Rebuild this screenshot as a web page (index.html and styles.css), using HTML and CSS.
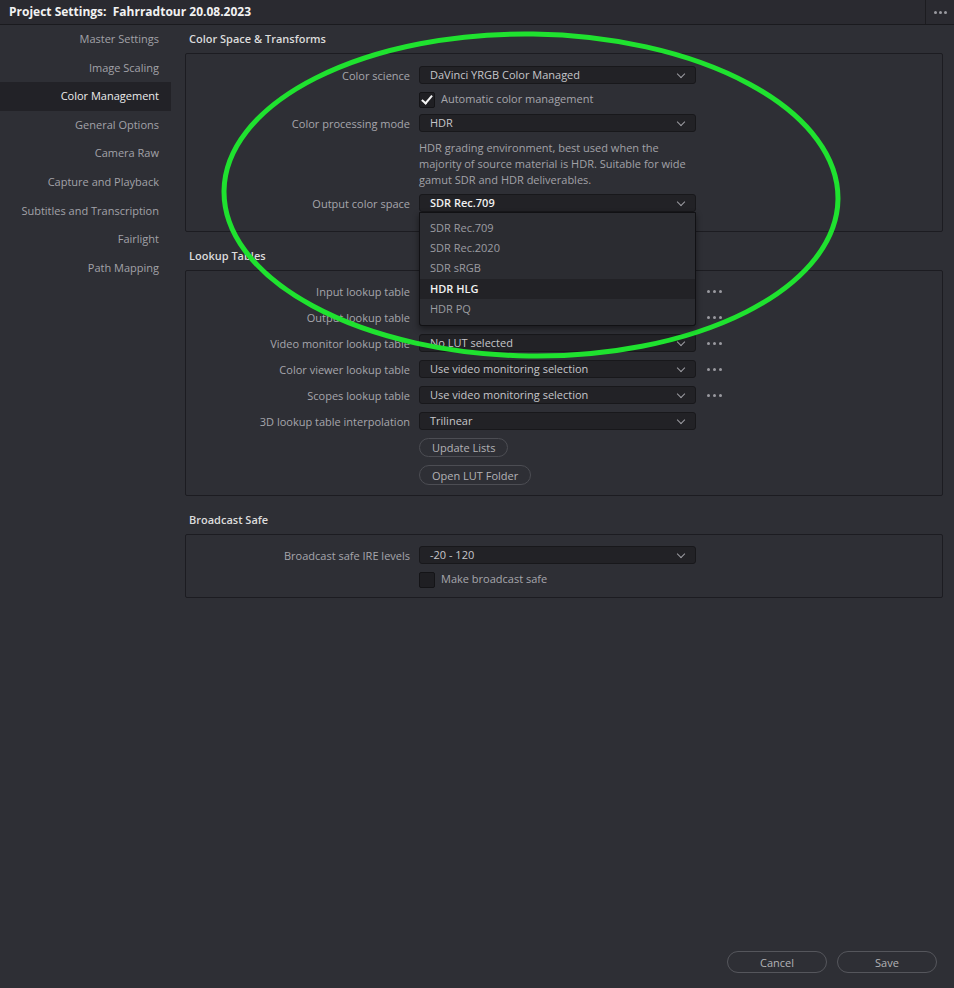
FILE: index.html
```html
<!DOCTYPE html>
<html lang="en">

<head>
    <meta charset="UTF-8">
    <title>Project Settings</title>
    <link rel="stylesheet" href="styles.css">
</head>

<body>

    <div class="window">
        <div class="title_bar">
            <div class="title">Project Settings:&nbsp; Fahrradtour 20.08.2023</div>
            <div class="title_more"><i></i><i></i><i></i></div>
        </div>

        <div class="main">
            <ul class="sidebar">
                <li>Master Settings</li>
                <li>Image Scaling</li>
                <li class="active">Color Management</li>
                <li>General Options</li>
                <li>Camera Raw</li>
                <li>Capture and Playback</li>
                <li>Subtitles and Transcription</li>
                <li>Fairlight</li>
                <li>Path Mapping</li>
            </ul>

            <div class="content">
                <div class="section_title first">Color Space &amp; Transforms</div>
                <div class="panel panel_color">
                    <div class="row">
                        <label>Color science</label>
                        <div class="select">DaVinci YRGB Color Managed</div>
                    </div>
                    <div class="row">
                        <span></span>
                        <div class="check checked">Automatic color management</div>
                    </div>
                    <div class="row">
                        <label>Color processing mode</label>
                        <div class="select">HDR</div>
                    </div>
                    <div class="row desc_row">
                        <span></span>
                        <p class="desc">HDR grading environment, best used when the majority of source material is HDR. Suitable for wide gamut SDR and HDR deliverables.</p>
                    </div>
                    <div class="row">
                        <label>Output color space</label>
                        <div class="select open">
                            SDR Rec.709
                            <ul class="select_menu">
                                <li>SDR Rec.709</li>
                                <li>SDR Rec.2020</li>
                                <li>SDR sRGB</li>
                                <li class="hover">HDR HLG</li>
                                <li>HDR PQ</li>
                            </ul>
                        </div>
                    </div>
                </div>

                <div class="section_title">Lookup Tables</div>
                <div class="panel panel_lut">
                    <!-- 前两个下拉框被弹出菜单挡住 -->
                    <div class="row">
                        <label>Input lookup table</label>
                        <div class="select"></div>
                        <div class="more"><i></i><i></i><i></i></div>
                    </div>
                    <div class="row">
                        <label>Output lookup table</label>
                        <div class="select"></div>
                        <div class="more"><i></i><i></i><i></i></div>
                    </div>
                    <div class="row">
                        <label>Video monitor lookup table</label>
                        <div class="select">No LUT selected</div>
                        <div class="more"><i></i><i></i><i></i></div>
                    </div>
                    <div class="row">
                        <label>Color viewer lookup table</label>
                        <div class="select">Use video monitoring selection</div>
                        <div class="more"><i></i><i></i><i></i></div>
                    </div>
                    <div class="row">
                        <label>Scopes lookup table</label>
                        <div class="select">Use video monitoring selection</div>
                        <div class="more"><i></i><i></i><i></i></div>
                    </div>
                    <div class="row">
                        <label>3D lookup table interpolation</label>
                        <div class="select">Trilinear</div>
                    </div>
                    <div class="row btn_row">
                        <span></span>
                        <div><button class="pill">Update Lists</button></div>
                    </div>
                    <div class="row btn_row">
                        <span></span>
                        <div><button class="pill">Open LUT Folder</button></div>
                    </div>
                </div>

                <div class="section_title">Broadcast Safe</div>
                <div class="panel panel_safe">
                    <div class="row">
                        <label>Broadcast safe IRE levels</label>
                        <div class="select">-20 - 120</div>
                    </div>
                    <div class="row">
                        <span></span>
                        <div class="check">Make broadcast safe</div>
                    </div>
                </div>
            </div>
        </div>

        <div class="footer">
            <button class="pill footer_btn">Cancel</button>
            <button class="pill footer_btn">Save</button>
        </div>
    </div>

    <!-- 标注圈 -->
    <svg class="mark" width="954" height="988" viewBox="0 0 954 988">
        <ellipse cx="531" cy="195" rx="307" ry="161" transform="rotate(0.8 531 195)" fill="none" stroke="#1fe22f" stroke-width="5" />
    </svg>

</body>

</html>
```

FILE: styles.css
```css
* {
    margin: 0;
    padding: 0;
    box-sizing: border-box;
}

body {
    background-color: #2e2f35;
    font-family: "Open Sans", "Liberation Sans", sans-serif;
    font-size: 11px;
    color: #a6a6ac;
}

.window {
    position: relative;
    width: 954px;
    height: 988px;
    display: flex;
    flex-direction: column;
}

.title_bar {
    height: 25px;
    display: flex;
    align-items: stretch;
    background-color: #2a2a30;
    border-bottom: 1px solid #1a1a1e;
}

.title {
    flex: 1;
    padding-left: 9px;
    line-height: 24px;
    font-size: 12px;
    font-weight: 700;
    color: #f2f2f2;
}

.title_more {
    width: 29px;
    border-left: 1px solid #1c1c20;
    display: flex;
    align-items: center;
    justify-content: center;
    gap: 2px;
}

.title_more i,
.more i {
    width: 3px;
    height: 3px;
    border-radius: 50%;
    background: #9a9aa0;
}

.main {
    flex: 1;
    display: flex;
}

.sidebar {
    width: 171px;
    list-style: none;
}

.sidebar li {
    height: 28.6px;
    line-height: 28.6px;
    text-align: right;
    padding-right: 12px;
    color: #a2a2a8;
}

.sidebar li.active {
    background-color: #222227;
    color: #ececec;
}

.content {
    flex: 1;
    padding: 0 11px 0 14px;
}

.section_title {
    height: 28px;
    line-height: 28px;
    margin-top: 10px;
    padding-left: 4px;
    font-weight: 600;
    color: #dcdcdc;
}

.section_title.first {
    margin-top: 0;
}

.panel {
    border: 1px solid #1c1c21;
    border-radius: 2px;
    display: flex;
    flex-direction: column;
}

.panel_color {
    padding: 12px 0 19px;
    gap: 6px;
}

.panel_lut {
    padding: 11px 0 10px;
    gap: 8px;
}

.panel_safe {
    padding: 11px 0 9px;
    gap: 6px;
}

.row {
    display: grid;
    grid-template-columns: 224px 277px auto;
    column-gap: 9px;
    align-items: center;
    min-height: 18px;
}

.row label {
    text-align: right;
    color: #a6a6ac;
}

.select {
    position: relative;
    height: 18px;
    line-height: 16px;
    padding-left: 10px;
    background-color: #222226;
    border: 1px solid #18181b;
    border-radius: 3px;
    color: #c6c6ca;
}

.select::after {
    content: "";
    position: absolute;
    right: 11px;
    top: 4px;
    width: 5px;
    height: 5px;
    border-right: 1px solid #9c9ca2;
    border-bottom: 1px solid #9c9ca2;
    transform: rotate(45deg);
}

.select.open {
    color: #f0f0f0;
    font-weight: 600;
}

.select_menu {
    position: absolute;
    left: -1px;
    right: -1px;
    top: 17px;
    z-index: 5;
    padding: 5px 0 6px;
    list-style: none;
    background-color: #2b2c31;
    border: 1px solid #111114;
    border-radius: 0 0 3px 3px;
    box-shadow: 0 3px 6px rgba(0, 0, 0, .45);
    font-weight: 400;
}

.select_menu li {
    height: 20.2px;
    line-height: 20.2px;
    padding-left: 10px;
    color: #9c9ca2;
}

.select_menu li.hover {
    background-color: #222226;
    color: #f2f2f2;
    font-weight: 600;
}

.check {
    position: relative;
    height: 18px;
    line-height: 18px;
    padding-left: 22px;
    color: #a6a6ac;
}

.check::before {
    content: "";
    position: absolute;
    left: 0;
    top: 2px;
    width: 14px;
    height: 14px;
    background-color: #1f1f23;
    border: 1px solid #141417;
    border-radius: 2px;
}

.check.checked::after {
    content: "";
    position: absolute;
    left: 5px;
    top: 3px;
    width: 4px;
    height: 9px;
    border-right: 2px solid #f4f4f4;
    border-bottom: 2px solid #f4f4f4;
    transform: rotate(40deg);
}

.desc_row {
    margin: 2px 0 0;
}

.desc {
    line-height: 16px;
    color: #a2a2a8;
    padding-right: 4px;
}

.more {
    display: flex;
    gap: 3px;
    padding-left: 2px;
}

.pill {
    height: 19px;
    padding: 0 12px;
    background: transparent;
    border: 1px solid #4c4d53;
    border-radius: 10px;
    font-family: inherit;
    font-size: 11px;
    color: #b2b2b6;
}

.btn_row .pill {
    display: block;
}

.panel_lut .btn_row:last-child .pill {
    height: 20px;
}

.footer {
    display: flex;
    justify-content: flex-end;
    gap: 10px;
    padding: 0 17px 15px 0;
}

.footer_btn {
    width: 100px;
    height: 22px;
    border-radius: 11px;
    border-color: #55565c;
}

.mark {
    position: absolute;
    left: 0;
    top: 0;
    pointer-events: none;
}
```
